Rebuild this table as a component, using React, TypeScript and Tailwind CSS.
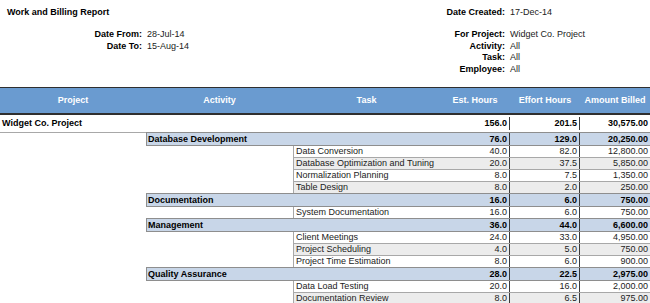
import React from "react"

type Task = { name: string; est: string; effort: string; amount: string }
type Activity = { name: string; est: string; effort: string; amount: string; tasks: Task[] }

const activities: Activity[] = [
  {
    name: "Database Development",
    est: "76.0",
    effort: "129.0",
    amount: "20,250.00",
    tasks: [
      { name: "Data Conversion", est: "40.0", effort: "82.0", amount: "12,800.00" },
      { name: "Database Optimization and Tuning", est: "20.0", effort: "37.5", amount: "5,850.00" },
      { name: "Normalization Planning", est: "8.0", effort: "7.5", amount: "1,350.00" },
      { name: "Table Design", est: "8.0", effort: "2.0", amount: "250.00" },
    ],
  },
  {
    name: "Documentation",
    est: "16.0",
    effort: "6.0",
    amount: "750.00",
    tasks: [{ name: "System Documentation", est: "16.0", effort: "6.0", amount: "750.00" }],
  },
  {
    name: "Management",
    est: "36.0",
    effort: "44.0",
    amount: "6,600.00",
    tasks: [
      { name: "Client Meetings", est: "24.0", effort: "33.0", amount: "4,950.00" },
      { name: "Project Scheduling", est: "4.0", effort: "5.0", amount: "750.00" },
      { name: "Project Time Estimation", est: "8.0", effort: "6.0", amount: "900.00" },
    ],
  },
  {
    name: "Quality Assurance",
    est: "28.0",
    effort: "22.5",
    amount: "2,975.00",
    tasks: [
      { name: "Data Load Testing", est: "20.0", effort: "16.0", amount: "2,000.00" },
      { name: "Documentation Review", est: "8.0", effort: "6.5", amount: "975.00" },
    ],
  },
]

function Nums({ est, effort, amount }: { est: string; effort: string; amount: string }) {
  return (
    <>
      <div className="w-[70px] shrink-0 text-right pr-[2px] border-r border-[#3a3a3a]">{est}</div>
      <div className="w-[70px] shrink-0 text-right pr-[2px] border-r border-[#3a3a3a]">{effort}</div>
      <div className="w-[70px] shrink-0 text-right pr-[2px]">{amount}</div>
    </>
  )
}

export default function App() {
  return (
    <div className="w-[650px] h-[303px] overflow-hidden bg-white text-[9px] text-[#222] font-['Liberation_Sans',Arial,sans-serif]">
      {/* report header */}
      <div className="flex h-[87px]">
        <div className="w-[325px]">
          <div className="h-[29px] pt-[6px] pl-[7px] leading-[12px] font-bold text-black">Work and Billing Report</div>
          <div className="grid grid-cols-[142px_1fr] gap-x-[5px] leading-[11.7px]">
            <span className="text-right font-bold text-black">Date From:</span>
            <span>28-Jul-14</span>
            <span className="text-right font-bold text-black">Date To:</span>
            <span>15-Aug-14</span>
          </div>
        </div>
        <div className="w-[325px]">
          <div className="h-[29px] pt-[6px] leading-[12px] grid grid-cols-[180px_1fr] gap-x-[5px]">
            <span className="text-right font-bold text-black">Date Created:</span>
            <span>17-Dec-14</span>
          </div>
          <div className="grid grid-cols-[180px_1fr] gap-x-[5px] leading-[11.7px]">
            <span className="text-right font-bold text-black">For Project:</span>
            <span>Widget Co. Project</span>
            <span className="text-right font-bold text-black">Activity:</span>
            <span>All</span>
            <span className="text-right font-bold text-black">Task:</span>
            <span>All</span>
            <span className="text-right font-bold text-black">Employee:</span>
            <span>All</span>
          </div>
        </div>
      </div>

      {/* column header */}
      <div className="flex h-[28px] items-center bg-[#6a9bd0] border-t border-b-2 border-[#2f2f2f] text-white font-bold">
        <div className="w-[146px] text-center">Project</div>
        <div className="w-[147px] text-center">Activity</div>
        <div className="w-[147px] text-center">Task</div>
        <div className="w-[70px] text-center">Est. Hours</div>
        <div className="w-[70px] text-center">Effort Hours</div>
        <div className="w-[70px] text-center">Amount Billed</div>
      </div>

      {/* project total */}
      <div className="flex h-[18px] items-center font-bold text-black border-b border-[#a8a8a8]">
        <div className="flex-1 pl-[2px] self-center">Widget Co. Project</div>
        <div className="flex self-stretch items-center">
          <Nums est="156.0" effort="201.5" amount="30,575.00" />
        </div>
      </div>

      {activities.map((a) => (
        <div key={a.name}>
          <div className="flex h-[14px] -mt-px">
            <div className="w-[146px] shrink-0" />
            <div className="flex flex-1 items-center bg-[#c8d6e8] border-l border-y border-[#8e8e8e] font-bold text-black leading-[12px]">
              <div className="flex-1 pl-[1px]">{a.name}</div>
              <div className="flex self-stretch items-center">
                <Nums est={a.est} effort={a.effort} amount={a.amount} />
              </div>
            </div>
          </div>
          {a.tasks.map((t, i) => (
            <div key={t.name} className="flex h-[12px]">
              <div className="w-[293px] shrink-0" />
              <div
                className={`flex flex-1 items-center border-l border-b border-[#a8a8a8] leading-[11px] ${
                  i % 2 === 1 ? "bg-[#ececec]" : "bg-white"
                }`}
              >
                <div className="flex-1 pl-[2px]">{t.name}</div>
                <div className="flex self-stretch items-center">
                  <Nums est={t.est} effort={t.effort} amount={t.amount} />
                </div>
              </div>
            </div>
          ))}
        </div>
      ))}
    </div>
  )
}
